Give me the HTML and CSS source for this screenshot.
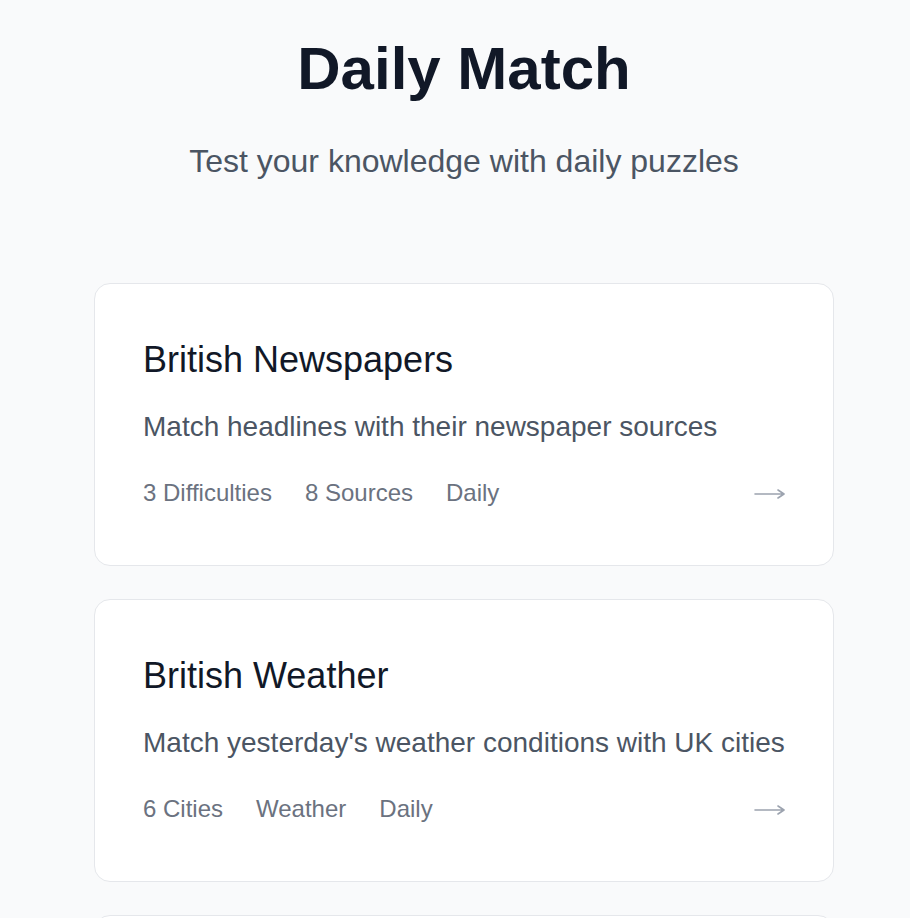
FILE: index.html
```html
<!DOCTYPE html>
<html lang="en">
<head>
<meta charset="utf-8">
<title>Daily Match</title>
<link rel="stylesheet" href="styles.css">
</head>
<body>
<div class="page">
  <header class="hero">
    <h1 class="hero-title">Daily Match</h1>
    <p class="hero-sub">Test your knowledge with daily puzzles</p>
  </header>
  <main class="cards">
    <a class="card" href="#">
      <h2 class="card-title">British Newspapers</h2>
      <p class="card-desc">Match headlines with their newspaper sources</p>
      <div class="card-meta">
        <span>3 Difficulties</span>
        <span>8 Sources</span>
        <span>Daily</span>
        <svg class="arrow" width="31" height="12" viewBox="0 0 31 12" aria-hidden="true"><path d="M1 6H30M24 2L30 6L24 10" fill="none" stroke="currentColor" stroke-width="1.6" stroke-linecap="round" stroke-linejoin="round"/></svg>
      </div>
    </a>
    <a class="card" href="#">
      <h2 class="card-title">British Weather</h2>
      <p class="card-desc">Match yesterday's weather conditions with UK cities</p>
      <div class="card-meta">
        <span>6 Cities</span>
        <span>Weather</span>
        <span>Daily</span>
        <svg class="arrow" width="31" height="12" viewBox="0 0 31 12" aria-hidden="true"><path d="M1 6H30M24 2L30 6L24 10" fill="none" stroke="currentColor" stroke-width="1.6" stroke-linecap="round" stroke-linejoin="round"/></svg>
      </div>
    </a>
    <a class="card" href="#">
      <h2 class="card-title">British Football</h2>
      <p class="card-desc">Match players with their football clubs</p>
      <div class="card-meta">
        <span>20 Clubs</span>
        <span>Sport</span>
        <span>Daily</span>
        <svg class="arrow" width="31" height="12" viewBox="0 0 31 12" aria-hidden="true"><path d="M1 6H30M24 2L30 6L24 10" fill="none" stroke="currentColor" stroke-width="1.6" stroke-linecap="round" stroke-linejoin="round"/></svg>
      </div>
    </a>
  </main>
</div>
</body>
</html>
```

FILE: styles.css
```css
* { box-sizing: border-box; }

html, body {
  margin: 0;
  padding: 0;
  background: #f9fafb;
  font-family: "Liberation Sans", Arial, sans-serif;
}

.page {
  padding: 33px 0 40px 18px;
}

.hero {
  text-align: center;
}

.hero-title {
  margin: 0;
  font-size: 60px;
  line-height: 72px;
  font-weight: 700;
  color: #111827;
}

.hero-sub {
  margin: 32px 0 0;
  font-size: 32px;
  line-height: 48px;
  color: #4b5563;
}

.cards {
  width: 740px;
  margin: 98px auto 0;
  display: flex;
  flex-direction: column;
  gap: 33px;
}

.card {
  display: block;
  background: #ffffff;
  border: 1px solid #e5e7eb;
  border-radius: 16px;
  padding: 49px 48px 55px;
  text-decoration: none;
}

.card-title {
  margin: 0;
  font-size: 36px;
  line-height: 54px;
  font-weight: 400;
  color: #111827;
}

.card-desc {
  margin: 18px 0 0;
  font-size: 28px;
  line-height: 44.8px;
  color: #4b5563;
}

.card-meta {
  margin-top: 26px;
  display: flex;
  align-items: center;
  gap: 33px;
  font-size: 24px;
  line-height: 34px;
  color: #6b7280;
}

.arrow {
  margin-left: auto;
  margin-top: 3px;
  color: #9ca3af;
}
```
